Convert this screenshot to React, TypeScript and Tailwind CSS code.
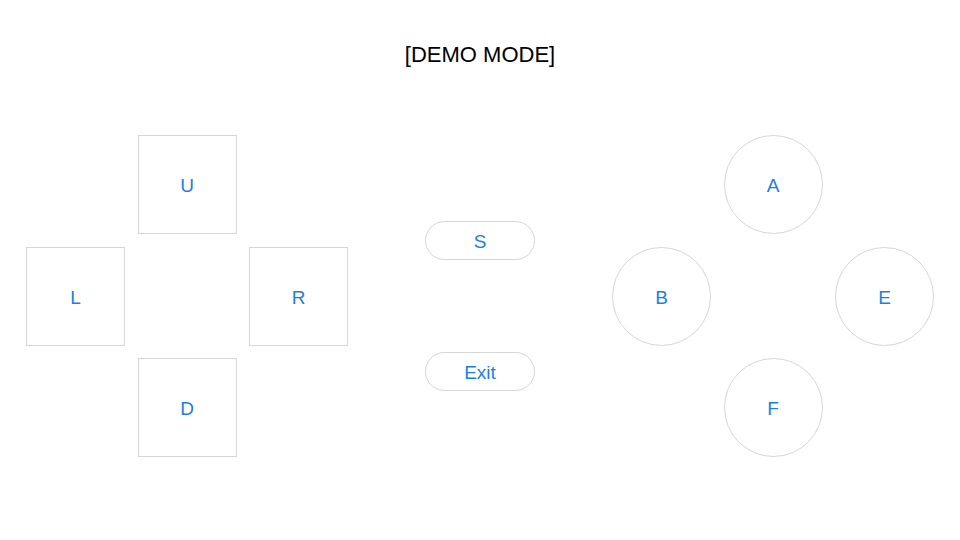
export default function App() {
  const key =
    "flex items-center justify-center border border-[#d6d6d6] text-[19px] leading-none pt-[2px] text-[#1a7fe5] bg-white";
  const pad = "grid grid-cols-[99px_99px_99px] grid-rows-[99px_99px_99px] gap-[12.5px]";
  return (
    <div className="w-[960px] h-[540px] bg-white flex flex-col" style={{ fontFamily: '"Liberation Sans", Arial, sans-serif' }}>
      <div className="h-[108px] pt-[41px] text-center text-[22px] leading-[28px] text-black">[DEMO MODE]</div>
      <div className="mt-[27px] flex justify-between pl-[26px] pr-[26px]">
        {/* directional pad */}
        <div className={pad}>
          <div />
          <div className={key}>U</div>
          <div />
          <div className={key}>L</div>
          <div />
          <div className={key}>R</div>
          <div />
          <div className={key}>D</div>
          <div />
        </div>
        {/* system buttons */}
        <div className="flex flex-col items-center pt-[86px] gap-[92px]">
          <button className={`${key} w-[110px] h-[39px] rounded-full`}>S</button>
          <button className={`${key} w-[110px] h-[39px] rounded-full`}>Exit</button>
        </div>
        {/* action buttons */}
        <div className={pad}>
          <div />
          <div className={`${key} rounded-full`}>A</div>
          <div />
          <div className={`${key} rounded-full`}>B</div>
          <div />
          <div className={`${key} rounded-full`}>E</div>
          <div />
          <div className={`${key} rounded-full`}>F</div>
          <div />
        </div>
      </div>
    </div>
  );
}
